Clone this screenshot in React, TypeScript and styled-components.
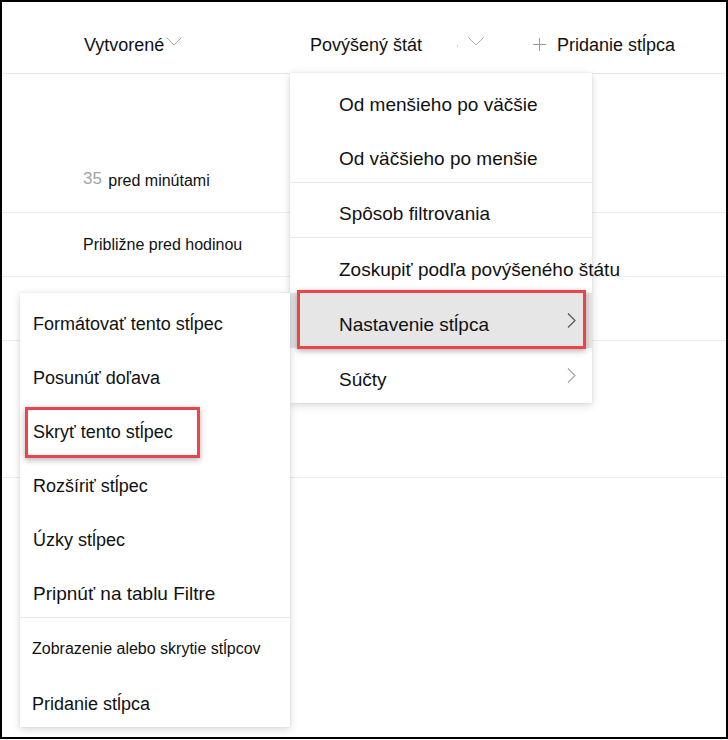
import React from 'react';
import styled, { createGlobalStyle } from 'styled-components';

const GlobalStyle = createGlobalStyle`
  body {
    margin: 0;
    background: #ffffff;
    font-family: "Liberation Sans", Arial, sans-serif;
    color: #111111;
  }
`;

const Frame = styled.div`
  position: relative;
  width: 728px;
  height: 739px;
  box-sizing: border-box;
  border: 2px solid #000000;
  overflow: hidden;
  background: #ffffff;
`;

const HeaderRow = styled.div`
  display: grid;
  grid-template-columns: 226px 223px 1fr;
  height: 72px;
  box-sizing: border-box;
  padding: 32px 0 0 82px;
  border-bottom: 1px solid #e6e6e6;
  font-size: 18px;
  line-height: 22px;
`;

const HeaderCell = styled.div`
  display: flex;
  align-items: flex-start;
  white-space: nowrap;
`;

const ChevronBox = styled.span<{ $gap: number }>`
  display: flex;
  margin: 3px 0 0 ${(p) => p.$gap}px;
  flex: none;
`;

const Tick = styled.span`
  width: 1px;
  height: 3px;
  margin: 10px 0 0 35px;
  background: #d8d8d8;
`;

const PlusIcon = styled.svg`
  display: block;
  margin: 4px 11px 0 0;
  flex: none;
`;

const Row = styled.div<{ $h: number }>`
  display: flex;
  align-items: flex-end;
  height: ${(p) => p.$h}px;
  box-sizing: border-box;
  padding: 0 0 21px 81px;
  border-bottom: 1px solid #ececec;
  font-size: 16px;
  line-height: 20px;
`;

const Muted = styled.span`
  font-size: 17px;
  color: #a3a3a3;
  margin-right: 2px;
  vertical-align: 2px;
`;

const Menu = styled.div<{ $top: number; $left: number; $w: number }>`
  position: absolute;
  top: ${(p) => p.$top}px;
  left: ${(p) => p.$left}px;
  width: ${(p) => p.$w}px;
  display: flex;
  flex-direction: column;
  background: #ffffff;
  box-shadow: 0 2px 8px rgba(0, 0, 0, 0.16), 0 0 2px rgba(0, 0, 0, 0.08);
`;

const Item = styled.div<{ $h: number; $pad: number; $size?: number; $active?: boolean; $sep?: boolean }>`
  position: relative;
  display: flex;
  align-items: center;
  justify-content: space-between;
  height: ${(p) => p.$h}px;
  box-sizing: border-box;
  padding: 0 16px 0 ${(p) => p.$pad}px;
  font-size: ${(p) => p.$size ?? 18}px;
  line-height: 22px;
  white-space: nowrap;
  background: ${(p) => (p.$active ? '#e6e6e6' : '#ffffff')};
  border-bottom: ${(p) => (p.$sep ? '1px solid #e8e8e8' : 'none')};
`;

const Label = styled.span`
  padding-top: 8px;
`;

const Divider = styled.div`
  height: 1px;
  background: #e8e8e8;
`;

const Callout = styled.div<{ $x: number; $y: number; $w: number; $h: number }>`
  position: absolute;
  z-index: 2;
  left: ${(p) => p.$x}px;
  top: ${(p) => p.$y}px;
  width: ${(p) => p.$w}px;
  height: ${(p) => p.$h}px;
  box-sizing: border-box;
  border: 3px solid #ee4449;
  box-shadow: 0 2px 6px rgba(0, 0, 0, 0.3);
  pointer-events: none;
`;

const Down = () => (
  <svg width="16" height="9" viewBox="0 0 16 9" fill="none" style={{ display: 'block' }}>
    <polyline points="0.5,0.5 8,8 15.5,0.5" stroke="#ababab" strokeWidth="1" />
  </svg>
);

const Right = ({ color }: { color: string }) => (
  <svg width="9" height="15" viewBox="0 0 9 15" fill="none">
    <polyline points="1,0.5 8,7.5 1,14.5" stroke={color} strokeWidth="1.2" />
  </svg>
);

export default function App() {
  return (
    <Frame>
      <GlobalStyle />
      <HeaderRow>
        <HeaderCell>
          Vytvorené
          <ChevronBox $gap={2}>
            <Down />
          </ChevronBox>
        </HeaderCell>
        <HeaderCell>
          Povýšený štát
          <Tick />
          <ChevronBox $gap={10}>
            <Down />
          </ChevronBox>
        </HeaderCell>
        <HeaderCell>
          <PlusIcon width="13" height="13" viewBox="0 0 13 13">
            <line x1="6.5" y1="0" x2="6.5" y2="13" stroke="#9a9a9a" strokeWidth="1" />
            <line x1="0" y1="6.5" x2="13" y2="6.5" stroke="#9a9a9a" strokeWidth="1" />
          </PlusIcon>
          Pridanie stĺpca
        </HeaderCell>
      </HeaderRow>

      <Row $h={139}>
        <span>
          <Muted>35</Muted> pred minútami
        </span>
      </Row>
      <Row $h={64}>Približne pred hodinou</Row>
      <Row $h={64} />
      <Row $h={137} />

      <Menu $top={71} $left={288} $w={302}>
        <Item $h={55} $pad={49} $size={19}><Label>Od menšieho po väčšie</Label></Item>
        <Item $h={55} $pad={49} $size={19} $sep><Label>Od väčšieho po menšie</Label></Item>
        <Item $h={55} $pad={49} $size={19} $sep><Label>Spôsob filtrovania</Label></Item>
        <Item $h={55} $pad={49} $size={19}><Label>Zoskupiť podľa povýšeného štátu</Label></Item>
        <Item $h={55} $pad={49} $size={19} $active>
          <Label>Nastavenie stĺpca</Label>
          <Right color="#555555" />
          <Callout $x={7} $y={-3} $w={289} $h={59} />
        </Item>
        <Item $h={55} $pad={49} $size={19}>
          <Label>Súčty</Label>
          <Right color="#a8a8a8" />
        </Item>
      </Menu>

      <Menu $top={291} $left={18} $w={270}>
        <Item $h={54} $pad={13}><Label>Formátovať tento stĺpec</Label></Item>
        <Item $h={54} $pad={13}><Label>Posunúť doľava</Label></Item>
        <Item $h={54} $pad={13}>
          <Label>Skryť tento stĺpec</Label>
          <Callout $x={5} $y={6} $w={175} $h={51} />
        </Item>
        <Item $h={54} $pad={13}><Label>Rozšíriť stĺpec</Label></Item>
        <Item $h={54} $pad={13}><Label>Úzky stĺpec</Label></Item>
        <Item $h={54} $pad={13} $size={19}><Label>Pripnúť na tablu Filtre</Label></Item>
        <Divider />
        <Item $h={54} $pad={12} $size={16}><Label>Zobrazenie alebo skrytie stĺpcov</Label></Item>
        <Item $h={55} $pad={12}><Label>Pridanie stĺpca</Label></Item>
      </Menu>
    </Frame>
  );
}
